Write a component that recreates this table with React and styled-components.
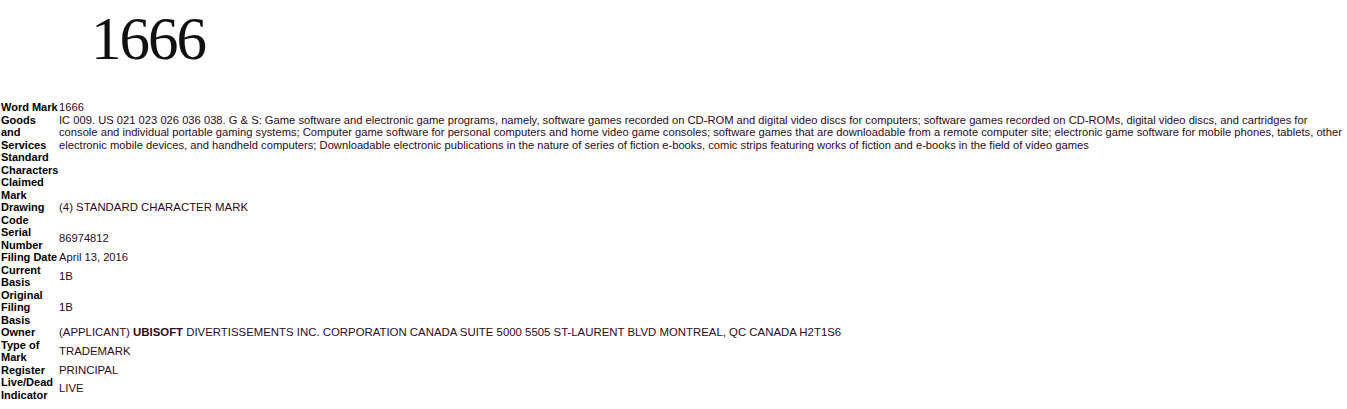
import React from "react";
import styled, { createGlobalStyle } from "styled-components";

const GlobalStyle = createGlobalStyle`
  html, body {
    margin: 0;
    padding: 0;
    background: #ffffff;
  }
`;

const Page = styled.div`
  width: 1347px;
  font-family: "Liberation Sans", Arial, sans-serif;
  font-size: 11px;
  line-height: 12.5px;
  color: #000;
`;

const MarkImage = styled.div`
  height: 101px;
  padding-left: 91px;
  padding-top: 9px;
  box-sizing: border-box;
  font-family: "Liberation Serif", "Times New Roman", serif;
  font-size: 61px;
  line-height: 60px;
  letter-spacing: -2px;
  color: #111;
`;

const Details = styled.div`
  display: grid;
  grid-template-columns: 57px 1fr;
  column-gap: 1px;
  align-items: center;
  padding-left: 1px;
`;

const Label = styled.div`
  font-weight: bold;
  color: #000;
`;

const Value = styled.div`
  font-size: ${(p) => (p.$caps ? "11.4px" : "11.2px")};
  color: #2c0a22;
  padding-right: 2px;
`;

const rows = [
  ["Word Mark", "1666"],
  [
    "Goods and Services",
    "IC 009. US 021 023 026 036 038. G & S: Game software and electronic game programs, namely, software games recorded on CD-ROM and digital video discs for computers; software games recorded on CD-ROMs, digital video discs, and cartridges for console and individual portable gaming systems; Computer game software for personal computers and home video game consoles; software games that are downloadable from a remote computer site; electronic game software for mobile phones, tablets, other electronic mobile devices, and handheld computers; Downloadable electronic publications in the nature of series of fiction e-books, comic strips featuring works of fiction and e-books in the field of video games",
  ],
  ["Standard Characters Claimed", ""],
  ["Mark Drawing Code", "(4) STANDARD CHARACTER MARK", true],
  ["Serial Number", "86974812"],
  ["Filing Date", "April 13, 2016"],
  ["Current Basis", "1B", true],
  ["Original Filing Basis", "1B", true],
  [
    "Owner",
    <>
      (APPLICANT) <b>UBISOFT</b> DIVERTISSEMENTS INC. CORPORATION CANADA SUITE 5000 5505 ST-LAURENT BLVD MONTREAL, QC CANADA H2T1S6
    </>,
    true,
  ],
  ["Type of Mark", "TRADEMARK", true],
  ["Register", "PRINCIPAL", true],
  ["Live/Dead Indicator", "LIVE", true],
];

export default function App() {
  return (
    <Page>
      <GlobalStyle />
      <MarkImage>1666</MarkImage>
      <Details>
        {rows.map(([label, value, caps]) => (
          <React.Fragment key={label}>
            <Label>{label}</Label>
            <Value $caps={caps}>{value}</Value>
          </React.Fragment>
        ))}
      </Details>
    </Page>
  );
}
